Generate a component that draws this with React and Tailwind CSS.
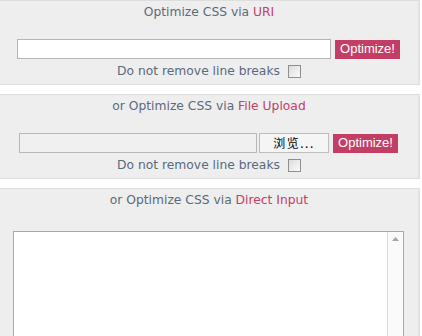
export default function App() {
  return (
    <div className="w-[422px] h-[336px] bg-white overflow-hidden font-['DejaVu_Sans',sans-serif] text-[12.3px] text-[#5b6a7b]">
      <Section>
        <Heading label="Optimize CSS via" link="URI" />
        <div className="flex items-center mt-[18px] pl-[17px]">
          <input type="text" className="w-[314px] h-[20px] bg-white border border-[#b5b5b5] outline-none" />
          <Button className="ml-[4px]" />
        </div>
        <LineBreaks />
      </Section>

      <div className="h-[9px]" />

      <Section>
        <Heading label="or Optimize CSS via" link="File Upload" />
        <div className="flex items-center mt-[18px] pl-[19px]">
          <div className="w-[238px] h-[20px] bg-[#f0f0f0] border border-[#b8b8b8]" />
          <div className="ml-[2px] w-[70px] h-[20px] bg-[#f5f5f5] border border-[#bdbdbd] flex items-center justify-center text-[12px] text-black tracking-[1.5px] font-['Noto_Sans_CJK_SC','DejaVu_Sans',sans-serif]">
            浏览...
          </div>
          <Button className="ml-[4px]" />
        </div>
        <LineBreaks />
      </Section>

      <div className="h-[9px]" />

      <div className="w-[420px] h-[160px] bg-[#eeeeee] border-t border-[#dedede] border-r-2 border-r-[#e3e3e3]">
        <Heading label="or Optimize CSS via" link="Direct Input" />
        <div className="mt-[22px] ml-[13px] w-[391px] h-[120px] bg-white border border-[#a9a9a9] flex justify-end">
          <div className="w-[16px] h-full border-l border-[#dcdcdc] bg-[#fafafa] flex justify-center pt-[5px]">
            <svg width="7" height="4" viewBox="0 0 7 4">
              <path d="M3.5 0 L7 4 L0 4 Z" fill="#a3a3a3" />
            </svg>
          </div>
        </div>
      </div>
    </div>
  )
}

function Section({ children }) {
  return (
    <div className="w-[420px] h-[85px] bg-[#eeeeee] border-t border-b border-[#dedede] border-r-2 border-r-[#e3e3e3] box-border">
      {children}
    </div>
  )
}

function Heading({ label, link }) {
  return (
    <div className="text-center pt-[3px] leading-[17px]">
      {label} <span className="text-[#c2406a]">{link}</span>
    </div>
  )
}

function Button({ className }) {
  return (
    <div className={`${className} w-[65px] h-[19px] bg-[#c23e64] text-white text-[13px] font-['Liberation_Sans',sans-serif] flex items-center justify-center`}>
      Optimize!
    </div>
  )
}

function LineBreaks() {
  return (
    <div className="flex items-center justify-center mt-[5px] leading-[14px]">
      <span>Do not remove line breaks</span>
      <span className="ml-[8px] w-[13px] h-[13px] border border-[#8f8f8f] bg-gradient-to-br from-[#dcdcdc] to-[#fbfbfb]" />
    </div>
  )
}
